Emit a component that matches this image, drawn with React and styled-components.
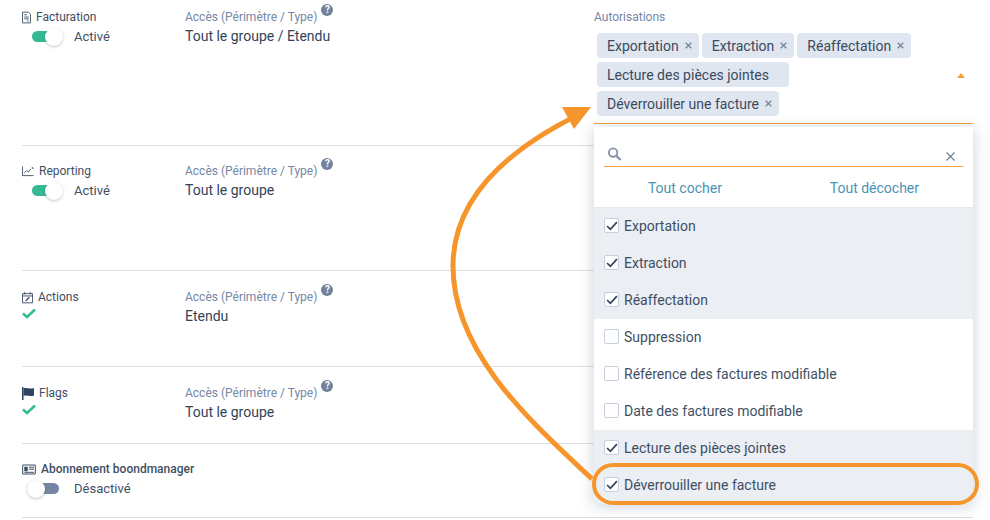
import React from 'react';
import styled, { createGlobalStyle } from 'styled-components';

const GlobalStyle = createGlobalStyle`
  html, body { margin: 0; padding: 0; background: #fff; overflow: hidden; }
  body { font-family: Roboto, "Liberation Sans", sans-serif; color: #3a4a5e; }
`;

const Page = styled.div`
  position: relative;
  box-sizing: border-box;
  width: 990px;
  height: 520px;
  padding: 0 17px 0 22px;
`;

const Row = styled.section`
  box-sizing: border-box;
  display: flex;
  height: ${p => p.$height}px;
  padding-top: ${p => p.$top}px;
  border-bottom: 1px solid #dcdee1;
`;

const NameCol = styled.div`
  width: 163px;
  flex: none;
`;

const Name = styled.div`
  display: flex;
  align-items: center;
  gap: 5px;
  height: 16px;
  font-size: 12px;
  white-space: nowrap;
  font-weight: ${p => (p.$bold ? 500 : 400)};
  color: #3f4f63;

  svg {
    flex: none;
  }
`;

const State = styled.div`
  display: flex;
  align-items: center;
  height: 22px;
  padding-left: ${p => (p.$on ? 10 : 5)}px;
`;

const Track = styled.span`
  position: relative;
  flex: none;
  width: ${p => (p.$on ? 26 : 32)}px;
  height: 11px;
  border-radius: 6px;
  margin-right: ${p => (p.$on ? 16 : 15)}px;
  background: ${p => (p.$on ? '#35b995' : '#7486a3')};
`;

const Knob = styled.span`
  position: absolute;
  top: -3px;
  ${p => (p.$on ? 'right: -5px;' : 'left: 0;')}
  width: 18px;
  height: 18px;
  border-radius: 50%;
  background: #fff;
  box-shadow: 0 1px 3px rgba(40, 50, 70, 0.28);
`;

const StateText = styled.span`
  font-size: 13px;
  color: #3f4f63;
`;

const Check = styled.svg`
  display: block;
  margin-top: 3px;
`;

const AccessCol = styled.div`
  width: 409px;
  flex: none;
`;

const FieldLabel = styled.div`
  display: flex;
  align-items: flex-start;
  gap: 4px;
  height: 16px;
  line-height: 16px;
  font-size: 12px;
  color: #7587a3;
`;

const Help = styled.span`
  flex: none;
  width: 12px;
  height: 12px;
  margin-top: -5px;
  border-radius: 50%;
  background: #74839c;
  color: #fff;
  font-size: 10px;
  font-weight: 700;
  line-height: 12px;
  text-align: center;
`;

const Value = styled.div`
  margin-top: 4px;
  font-size: 14px;
  line-height: 15px;
  color: #33445a;
`;

const PermCol = styled.div`
  position: relative;
  width: 379px;
  flex: none;
`;

const Select = styled.div`
  position: relative;
  display: flex;
  flex-wrap: wrap;
  align-content: flex-start;
  gap: 4px 3px;
  box-sizing: border-box;
  height: 91px;
  margin-top: 8px;
  padding: 0 26px 0 3px;
  border-bottom: 1px solid #f3a13c;
`;

const Tag = styled.span`
  display: inline-flex;
  align-items: center;
  box-sizing: border-box;
  height: 25px;
  padding: 0 7px 0 10px;
  border-radius: 4px;
  background: #e0e6f0;
  font-size: 14px;
  color: #3a4a5e;
`;

const TagRemove = styled.svg`
  margin-left: 6px;
  width: 7px;
  height: 7px;
  visibility: ${p => (p.$hidden ? 'hidden' : 'visible')};
`;

const Caret = styled.span`
  position: absolute;
  right: 8px;
  top: 40px;
  width: 0;
  height: 0;
  border-left: 4px solid transparent;
  border-right: 4px solid transparent;
  border-bottom: 5px solid #f5a033;
`;

const Dropdown = styled.div`
  position: absolute;
  left: 0;
  top: 118px;
  width: 379px;
  background: #fff;
  box-shadow: 0 2px 14px rgba(70, 85, 120, 0.28);
`;

const SearchBar = styled.div`
  display: flex;
  align-items: flex-end;
  justify-content: space-between;
  box-sizing: border-box;
  height: 40px;
  margin: 0 10px;
  padding: 0 8px 5px 3px;
  border-bottom: 1px solid #f3a13c;
`;

const Links = styled.div`
  display: flex;
  justify-content: space-around;
  align-items: center;
  box-sizing: border-box;
  height: 41px;
  padding-top: 2px;
  border-bottom: 1px solid #e4e8ee;
`;

const LinkText = styled.span`
  font-size: 14px;
  color: #4a93b4;
`;

const Option = styled.div`
  display: flex;
  align-items: center;
  gap: 5px;
  box-sizing: border-box;
  height: 37px;
  padding: 0 0 2px 10px;
  font-size: 14px;
  color: #3f4f63;
  background: ${p => (p.$checked ? '#ebeef3' : '#fff')};
`;

const Box = styled.span`
  display: flex;
  align-items: center;
  justify-content: center;
  box-sizing: border-box;
  width: 15px;
  height: 15px;
  border: 1px solid #c6cfdd;
  border-radius: 2px;
  background: #fff;
`;

const Annotation = styled.svg`
  position: absolute;
  left: 0;
  top: 0;
  pointer-events: none;
`;

const iconProps = { fill: 'none', stroke: '#3f4f63', strokeWidth: 1 };

const InvoiceIcon = () => (
  <svg {...iconProps} width={9} height={13} viewBox="0.5 0.5 10 13">
    <path d="M1 1h6.500L10 3.500V13H1z" />
    <path d="M3 4h3M3 6.500h5M3 8.500h5M6 10.800h2" />
  </svg>
);

const ChartIcon = () => (
  <svg {...iconProps} width={12} height={14} viewBox="0 0 13 14">
    <path d="M.5 2v10h12" />
    <path d="M2.500 9l2.500-2.500 2 1.500L9.500 5" />
    <path d="M10.500 3.500h1.500V5" />
  </svg>
);

const CalendarIcon = () => (
  <svg {...iconProps} width={11} height={13} viewBox="1 0.7 12 13">
    <path d="M1.500 3h11v10h-11zM1.500 5.500h11M4 1.200v2.600M10 1.200v2.600" />
    <path d="M5 11l4-4" strokeWidth="1.400" />
  </svg>
);

const FlagIcon = () => (
  <svg width={12} height={13} viewBox="0 0 12 13">
    <path d="M0 0h1.500v13H0z" fill="#2f4460" />
    <path d="M1.500 1.500C4.500 .2 7 2.500 12 1v7.500C8 10 5 7.500 1.500 9z" fill="#2f4460" />
  </svg>
);

const CardIcon = () => (
  <svg {...iconProps} width={14} height={11} viewBox="0 0 14 11" style={{ marginRight: 0 }}>
    <path d="M.7 1h12.600v9H.7z" />
    <path d="M2.500 3h3v4h-3z" fill="#3f4f63" strokeWidth=".5" />
    <path d="M7 3.200h5M7 5.200h5M2.500 8.300h9.500" />
  </svg>
);

const SearchIcon = () => (
  <svg width={15} height={14} viewBox="0 0 15 15" fill="none" stroke="#8593aa" strokeWidth="2">
    <circle cx="6" cy="6" r="4.500" />
    <path d="M9.500 9.500L14 14" strokeWidth="2.400" />
  </svg>
);

const CloseIcon = () => (
  <svg width={9} height={9} viewBox="0 0 9 9" fill="none" stroke="#6f7f96" strokeWidth="1.100">
    <path d="M.5 .5l8 8M8.500 .5l-8 8" />
  </svg>
);

const TickIcon = () => (
  <svg width={12} height={10} viewBox="0 0 11 9" fill="none" stroke="#33445a" strokeWidth="1.600">
    <path d="M1 4.500L4 7.500 10 1" />
  </svg>
);

const GreenCheck = () => (
  <Check width={14} height={11} viewBox="0 0 14 11" fill="none" stroke="#35b995" strokeWidth="2.600">
    <path d="M1 5.500L5 9 13 1.500" />
  </Check>
);

function Switch({ on }) {
  return (
    <State $on={on}>
      <Track $on={on}><Knob $on={on} /></Track>
      <StateText>{on ? 'Activé' : 'Désactivé'}</StateText>
    </State>
  );
}

function Access({ value }) {
  return (
    <AccessCol>
      <FieldLabel>Accès (Périmètre / Type)<Help>?</Help></FieldLabel>
      <Value>{value}</Value>
    </AccessCol>
  );
}

const tags = [
  { label: 'Exportation' },
  { label: 'Extraction' },
  { label: 'Réaffectation' },
  { label: 'Lecture des pièces jointes', hidden: true },
  { label: 'Déverrouiller une facture' },
];

const options = [
  { label: 'Exportation', checked: true },
  { label: 'Extraction', checked: true },
  { label: 'Réaffectation', checked: true },
  { label: 'Suppression' },
  { label: 'Référence des factures modifiable' },
  { label: 'Date des factures modifiable' },
  { label: 'Lecture des pièces jointes', checked: true },
  { label: 'Déverrouiller une facture', checked: true },
];

export default function App() {
  return (
    <Page>
      <GlobalStyle />

      <Row $height={146} $top={9}>
        <NameCol>
          <Name><InvoiceIcon />Facturation</Name>
          <Switch on />
        </NameCol>
        <Access value="Tout le groupe / Etendu" />
        <PermCol>
          <FieldLabel>Autorisations</FieldLabel>
          <Select>
            {tags.map(tag => (
              <Tag key={tag.label}>
                {tag.label}
                <TagRemove $hidden={tag.hidden} viewBox="0 0 7 7" fill="none" stroke="#76859c" strokeWidth="1.300">
                  <path d="M.7 .7l5.600 5.600M6.300 .7L.7 6.300" />
                </TagRemove>
              </Tag>
            ))}
            <Caret />
          </Select>
          <Dropdown>
            <SearchBar><SearchIcon /><CloseIcon /></SearchBar>
            <Links>
              <LinkText>Tout cocher</LinkText>
              <LinkText>Tout décocher</LinkText>
            </Links>
            {options.map(option => (
              <Option key={option.label} $checked={option.checked}>
                <Box>{option.checked && <TickIcon />}</Box>
                {option.label}
              </Option>
            ))}
          </Dropdown>
        </PermCol>
      </Row>

      <Row $height={125} $top={17}>
        <NameCol>
          <Name><ChartIcon />Reporting</Name>
          <Switch on />
        </NameCol>
        <Access value="Tout le groupe" />
      </Row>

      <Row $height={96} $top={18}>
        <NameCol>
          <Name><CalendarIcon />Actions</Name>
          <GreenCheck />
        </NameCol>
        <Access value="Etendu" />
      </Row>

      <Row $height={77} $top={18}>
        <NameCol>
          <Name><FlagIcon />Flags</Name>
          <GreenCheck />
        </NameCol>
        <Access value="Tout le groupe" />
      </Row>

      <Row $height={74} $top={17}>
        <NameCol>
          <Name $bold><CardIcon />Abonnement boondmanager</Name>
          <Switch />
        </NameCol>
      </Row>

      <Annotation width={990} height={520} viewBox="0 0 990 520" fill="none" stroke="#f7952d">
        <path d="M592 479C535 425 453 355 453 266C453 196 510 149 576 116" strokeWidth="5" />
        <path d="M562 107H591L574 129z" fill="#f7952d" stroke="none" />
        <rect x="594" y="465" width="383" height="38" rx="19" strokeWidth="4" />
      </Annotation>
    </Page>
  );
}
